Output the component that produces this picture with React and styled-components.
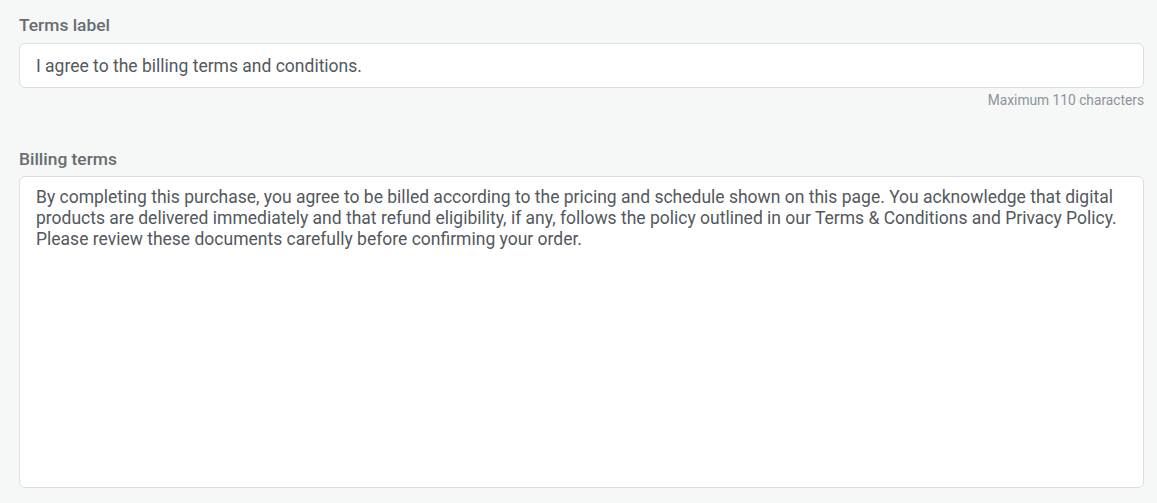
import React from "react";
import styled, { createGlobalStyle } from "styled-components";

const Global = createGlobalStyle`
  html, body { margin: 0; padding: 0; background: #f6f7f7; }
  body { font-family: Roboto, "Liberation Sans", Arial, sans-serif; }
  * { box-sizing: border-box; }
`;

const Page = styled.div`
  display: flex;
  flex-direction: column;
  padding: 15px 13px 0 19px;
`;

const Field = styled.div`
  display: flex;
  flex-direction: column;
  margin-bottom: ${(p) => p.$gap || 0}px;
`;

const Label = styled.label`
  font-size: 17.4px;
  font-weight: 500;
  line-height: 20px;
  color: #676c71;
  margin-bottom: ${(p) => p.$mb || 8}px;
`;

const Input = styled.input`
  height: 45px;
  width: 100%;
  border: 1px solid #dcdedf;
  border-radius: 6px;
  background: #fff;
  padding: 0 16px;
  font-family: inherit;
  font-size: 17.5px;
  color: #53585d;
  outline: none;
`;

const Helper = styled.div`
  align-self: flex-end;
  font-size: 13.75px;
  line-height: 16px;
  color: #8c939a;
  margin-top: 4px;
`;

const TextArea = styled.textarea`
  height: 312px;
  width: 100%;
  border: 1px solid #dcdedf;
  border-radius: 6px;
  background: #fff;
  padding: 10px 16px;
  font-family: inherit;
  font-size: 17.5px;
  line-height: 21px;
  color: #53585d;
  resize: none;
  outline: none;
`;

const termsText =
  "By completing this purchase, you agree to be billed according to the pricing and schedule shown on this page. You acknowledge that digital products are delivered immediately and that refund eligibility, if any, follows the policy outlined in our Terms & Conditions and Privacy Policy. Please review these documents carefully before confirming your order.";

export default function App() {
  return (
    <>
      <Global />
      <Page>
        <Field $gap={41}>
          <Label>Terms label</Label>
          <Input defaultValue="I agree to the billing terms and conditions." />
          <Helper>Maximum 110 characters</Helper>
        </Field>
        <Field>
          <Label $mb={7}>Billing terms</Label>
          <TextArea defaultValue={termsText} />
        </Field>
      </Page>
    </>
  );
}
